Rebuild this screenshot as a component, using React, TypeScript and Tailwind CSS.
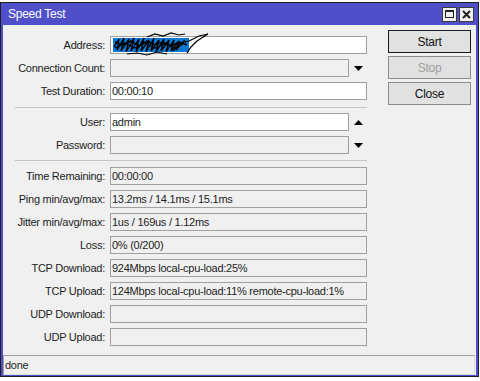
import type { ReactNode } from 'react'

type Dir = 'up' | 'down'

function Arrow({ dir }: { dir: Dir }) {
  return (
    <svg width="9" height="5" viewBox="0 0 9 5" className="block">
      <polygon points={dir === 'down' ? '0,0 9,0 4.5,5' : '0,5 9,5 4.5,0'} fill="#000" />
    </svg>
  )
}

function Field({
  label,
  value,
  white,
  arrow,
  children,
}: {
  label: string
  value?: string
  white?: boolean
  arrow?: Dir
  children?: ReactNode
}) {
  return (
    <div className="flex h-[18px] items-center">
      <div className="w-[102px] shrink-0 text-right whitespace-nowrap">{label}</div>
      <div
        className={`relative ml-[5px] flex h-[18px] shrink-0 items-center border border-[#a0a0a0] pl-[1px] whitespace-nowrap ${
          arrow ? 'w-[239px]' : 'w-[257px]'
        } ${white ? 'bg-white' : 'bg-[#f0f0f0]'}`}
      >
        {children ?? value}
      </div>
      {arrow && (
        <div className="flex w-[18px] justify-center">
          <Arrow dir={arrow} />
        </div>
      )}
    </div>
  )
}

function Separator({ className }: { className: string }) {
  return (
    <div className={`ml-[12px] w-[352px] ${className}`}>
      <div className="h-px bg-[#c4c4c4]" />
    </div>
  )
}

function Button({ label, disabled, primary }: { label: string; disabled?: boolean; primary?: boolean }) {
  return (
    <div
      className={`flex h-[23px] w-[83px] items-center justify-center border bg-[#e1e1e1] text-[12px] ${
        primary ? 'border-[#1a1a1a]' : 'border-[#8c8c8c]'
      } ${disabled ? 'text-[#a0a0a0]' : 'text-[#111]'}`}
    >
      {label}
    </div>
  )
}

// scribbled-out address
function Scribble() {
  return (
    <svg
      width="100"
      height="26"
      viewBox="0 0 100 26"
      className="pointer-events-none absolute left-0 top-[-5px]"
    >
      <rect x="2" y="6" width="76" height="14" fill="#0a78d4" />
      <polyline
        points="3,15 8,7 6,18 13,6 10,19 18,7 15,20 23,6 20,19 28,7 25,20 33,6 30,19 38,8 35,20 43,6 40,19 48,8 45,20 53,7 50,19 58,8 55,20 63,8 60,19 68,9 65,18 74,8"
        fill="none"
        stroke="#000"
        strokeWidth="1.3"
      />
      <polyline
        points="4,10 12,13 20,9 28,14 36,9 44,13 52,10 60,14 68,10 76,13"
        fill="none"
        stroke="#000"
        strokeWidth="1.5"
      />
      <polyline points="4,16 14,11 24,16 34,11 44,16 54,12 64,16 72,12" fill="none" stroke="#000" strokeWidth="1.2" />
      <polyline points="36,5 44,2 52,4 60,1 68,3 74,2" fill="none" stroke="#000" strokeWidth="1.2" />
      <polyline points="62,19 70,11 78,9 88,4 97,2 86,9 80,15 76,21" fill="none" stroke="#000" strokeWidth="1.2" />
      <polyline points="16,22 26,21 36,23 46,20 56,22" fill="none" stroke="#000" strokeWidth="1.2" />
    </svg>
  )
}

export default function App() {
  return (
    <div className="h-[381px] w-[480px] overflow-hidden bg-white pt-[2px] font-['Liberation_Sans',Arial,sans-serif] text-[11px] tracking-[-0.25px] text-[#1c1c1c]">
      <div className="flex h-[375px] w-[479px] flex-col border border-[#1e1e1e] bg-[#4f4fc9] px-[2px] pb-px">
        {/* title bar */}
        <div className="flex h-[22px] shrink-0 items-center justify-between pl-[5px] pr-[2px]">
          <span className="text-[12px] text-white">Speed Test</span>
          <div className="flex gap-[2px]">
            <div className="flex h-[15px] w-[15px] items-center justify-center border border-[#3a3a3a] bg-[#efefef]">
              <div className="h-[8px] w-[9px] border border-t-2 border-[#222]" />
            </div>
            <div className="flex h-[15px] w-[15px] items-center justify-center border border-[#3a3a3a] bg-[#efefef]">
              <svg width="9" height="9" viewBox="0 0 9 9">
                <path d="M1 1 L8 8 M8 1 L1 8" stroke="#222" strokeWidth="2" />
              </svg>
            </div>
          </div>
        </div>

        {/* body */}
        <div className="flex flex-1 flex-col bg-[#f0f0f0]">
          <div className="flex flex-1">
            <div className="flex w-[370px] flex-col gap-[5px] pt-[11px]">
              <Field label="Address:" white>
                <Scribble />
              </Field>
              <Field label="Connection Count:" arrow="down" />
              <Field label="Test Duration:" value="00:00:10" white />
              <Separator className="mt-[2px]" />
              <Field label="User:" value="admin" white arrow="up" />
              <Field label="Password:" arrow="down" />
              <Separator className="mt-[1px] mb-[1px]" />
              <Field label="Time Remaining:" value="00:00:00" />
              <Field label="Ping min/avg/max:" value="13.2ms / 14.1ms / 15.1ms" />
              <Field label="Jitter min/avg/max:" value="1us / 169us / 1.12ms" />
              <Field label="Loss:" value="0% (0/200)" />
              <Field label="TCP Download:" value="924Mbps local-cpu-load:25%" />
              <Field label="TCP Upload:" value="124Mbps local-cpu-load:11% remote-cpu-load:1%" />
              <Field label="UDP Download:" />
              <Field label="UDP Upload:" />
            </div>
            <div className="ml-[15px] flex flex-col gap-[3px] pt-[5px]">
              <Button label="Start" primary />
              <Button label="Stop" disabled />
              <Button label="Close" />
            </div>
          </div>

          {/* status bar */}
          <div className="mr-px flex h-[20px] items-center border border-t-[#a0a0a0] border-l-[#a0a0a0] border-r-[#dcdcdc] border-b-[#dcdcdc] pl-[1px]">
            done
          </div>
        </div>
      </div>
    </div>
  )
}
